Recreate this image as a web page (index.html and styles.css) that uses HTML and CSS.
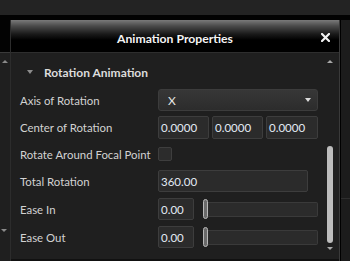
FILE: index.html
```html
<!DOCTYPE html>
<html>
<head>
<meta charset="utf-8">
<link rel="stylesheet" href="styles.css">
</head>
<body>
<div class="topbar"></div>
<div class="blackstrip"></div>
<div class="main">
  <div class="leftcol">
    <div class="lc-head"></div>
    <div class="lc-body">
      <div class="tri-up"></div>
      <div class="tri-down"></div>
    </div>
  </div>
  <div class="dialog">
    <div class="titlebar">
      <span class="title">Animation Properties</span>
      <svg class="close" width="9" height="9" viewBox="0 0 9 9"><path d="M1 1 L8 8 M8 1 L1 8" stroke="#f2f2f2" stroke-width="2.2" stroke-linecap="square"/></svg>
    </div>
    <div class="content">
      <div class="form">
        <div class="section">
          <span class="sec-tri"></span>
          <span class="sec-label">Rotation Animation</span>
        </div>
        <div class="grid">
          <div class="label">Axis of Rotation</div>
          <div class="ctrl"><div class="dropdown"><span>X</span><span class="dd-arrow"></span></div></div>

          <div class="label">Center of Rotation</div>
          <div class="ctrl triple">
            <div class="input w51">0.0000</div>
            <div class="input w51">0.0000</div>
            <div class="input w52">0.0000</div>
          </div>

          <div class="label">Rotate Around Focal Point</div>
          <div class="ctrl"><div class="checkbox"></div></div>

          <div class="label">Total Rotation</div>
          <div class="ctrl"><div class="input wide">360.00</div></div>

          <div class="label">Ease In</div>
          <div class="ctrl slider-row">
            <div class="input small">0.00</div>
            <div class="slider"><div class="thumb"></div><div class="track"></div></div>
          </div>

          <div class="label">Ease Out</div>
          <div class="ctrl slider-row">
            <div class="input small">0.00</div>
            <div class="slider"><div class="thumb"></div><div class="track"></div></div>
          </div>
        </div>
      </div>
      <div class="scrollbar">
        <div class="sb-up"></div>
        <div class="sb-thumb"></div>
        <div class="sb-down"></div>
      </div>
    </div>
  </div>
  <div class="rightcol">
    <div class="rc-a"></div>
    <div class="rc-b"></div>
  </div>
</div>
</body>
</html>
```
FILE: styles.css
```css
html, body {
  margin: 0;
  padding: 0;
}
body {
  width: 350px;
  height: 261px;
  overflow: hidden;
  background: #1e1e1e;
  font-family: Lato, "Open Sans", sans-serif;
  color: #d6d6d6;
}
.topbar {
  height: 15px;
  background: #232323;
}
.blackstrip {
  height: 5px;
  background: #020202;
}
.main {
  display: flex;
  height: 241px;
}
.leftcol {
  width: 10px;
  display: flex;
  flex-direction: column;
}
.lc-head {
  height: 32px;
  background: #030303;
  border-bottom: 1px solid #3a3a3a;
}
.lc-body {
  flex: 1;
  background: #1f1f1f;
  position: relative;
}
.tri-up {
  position: absolute;
  left: 2px;
  top: 7px;
  width: 0; height: 0;
  border-left: 3px solid transparent;
  border-right: 3px solid transparent;
  border-bottom: 3px solid #8a8a8a;
}
.tri-down {
  position: absolute;
  left: 1px;
  top: 176px;
  width: 0; height: 0;
  border-left: 3px solid transparent;
  border-right: 3px solid transparent;
  border-top: 3px solid #8a8a8a;
}
.dialog {
  width: 328px;
  border-left: 1px solid #2c2c2c;
  border-right: 1px solid #3a3a3a;
  display: flex;
  flex-direction: column;
  background: #1f1f1f;
}
.titlebar {
  height: 32px;
  border-bottom: 1px solid #2e2e2e;
  background: linear-gradient(to bottom, #7a7a7a 0px, #4a4a4a 6px, #1a1a1a 14px, #000 20px, #000 32px);
  display: flex;
  align-items: center;
  justify-content: center;
  position: relative;
}
.title {
  color: #f4f4f4;
  font-size: 12.2px;
  font-weight: 700;
  margin-top: 5px;
  white-space: nowrap;
}
.close {
  position: absolute;
  right: 9px;
  top: 13px;
}
.content {
  flex: 1;
  display: flex;
  border-bottom: 2px solid #111;
}
.form {
  flex: 1;
  padding-top: 6px;
}
.section {
  height: 26px;
  display: flex;
  align-items: center;
  padding-left: 16px;
}
.sec-tri {
  width: 0; height: 0;
  border-left: 3px solid transparent;
  border-right: 3px solid transparent;
  border-top: 4px solid #8c8c8c;
  margin-right: 11px;
}
.sec-label {
  font-size: 12px;
  font-weight: 700;
  color: #dcdcdc;
  white-space: nowrap;
}
.grid {
  margin-top: 1px;
  display: grid;
  grid-template-columns: 138px 160px;
  grid-template-rows: 28px 27px 26px 28px 28px 28px;
  padding-left: 9px;
}
.label {
  display: flex;
  align-items: center;
  font-size: 11.4px;
  color: #d2d2d2;
  white-space: nowrap;
}
.ctrl {
  display: flex;
  align-items: center;
}
.dropdown {
  width: 160px;
  height: 22px;
  box-sizing: border-box;
  border: 1px solid #3c3c3c;
  border-radius: 3px;
  background: linear-gradient(to bottom, #373737, #2c2c2c);
  display: flex;
  align-items: center;
  justify-content: space-between;
  padding: 0 6px 0 9px;
  font-size: 12px;
  color: #e6e6e6;
}
.dd-arrow {
  width: 0; height: 0;
  border-left: 3px solid transparent;
  border-right: 3px solid transparent;
  border-top: 4px solid #dcdcdc;
}
.input {
  height: 23px;
  box-sizing: border-box;
  border: 1px solid #3d3d3d;
  border-radius: 2px;
  background: #2b2b2b;
  display: flex;
  align-items: center;
  padding-left: 2px;
  font-size: 11.5px;
  color: #e2eaf4;
}
.triple {
  gap: 3px;
}
.w51 { width: 51px; }
.w52 { width: 52px; }
.wide { width: 150px; height: 22px; }
.small { width: 36px; height: 22px; }
.checkbox {
  width: 14px;
  height: 14px;
  box-sizing: border-box;
  border: 1px solid #3e3e3e;
  background: #2c2c2c;
  border-radius: 2px;
}
.slider-row {
  gap: 9px;
}
.slider {
  flex: 1;
  display: flex;
  align-items: center;
  position: relative;
  height: 22px;
}
.thumb {
  width: 5px;
  height: 20px;
  box-sizing: border-box;
  border: 1px solid #b8b8b8;
  border-radius: 3px;
  background: #6a6a6a;
  position: relative;
  z-index: 1;
}
.track {
  flex: 1;
  height: 15px;
  box-sizing: border-box;
  border: 1px solid #3a3a3a;
  border-left: none;
  border-radius: 0 2px 2px 0;
  background: #2b2b2b;
}
.scrollbar {
  width: 18px;
  display: flex;
  flex-direction: column;
  align-items: center;
  padding-top: 7px;
}
.sb-up {
  width: 0; height: 0;
  border-left: 3px solid transparent;
  border-right: 3px solid transparent;
  border-bottom: 3px solid #a8a8a8;
}
.sb-thumb {
  margin-top: 83px;
  width: 6px;
  height: 97px;
  border-radius: 3px;
  background: #bdbdbd;
}
.sb-down {
  margin-top: 4px;
  width: 0; height: 0;
  border-left: 3px solid transparent;
  border-right: 3px solid transparent;
  border-top: 3px solid #a8a8a8;
}
.rightcol {
  flex: 1;
  border-left: 1px solid #000;
  display: flex;
  flex-direction: column;
}
.rc-a {
  height: 178px;
  background: #1c1c1c;
  border-bottom: 1px solid #2e2e2e;
}
.rc-b {
  flex: 1;
  background: #1c1c1c;
}
```
